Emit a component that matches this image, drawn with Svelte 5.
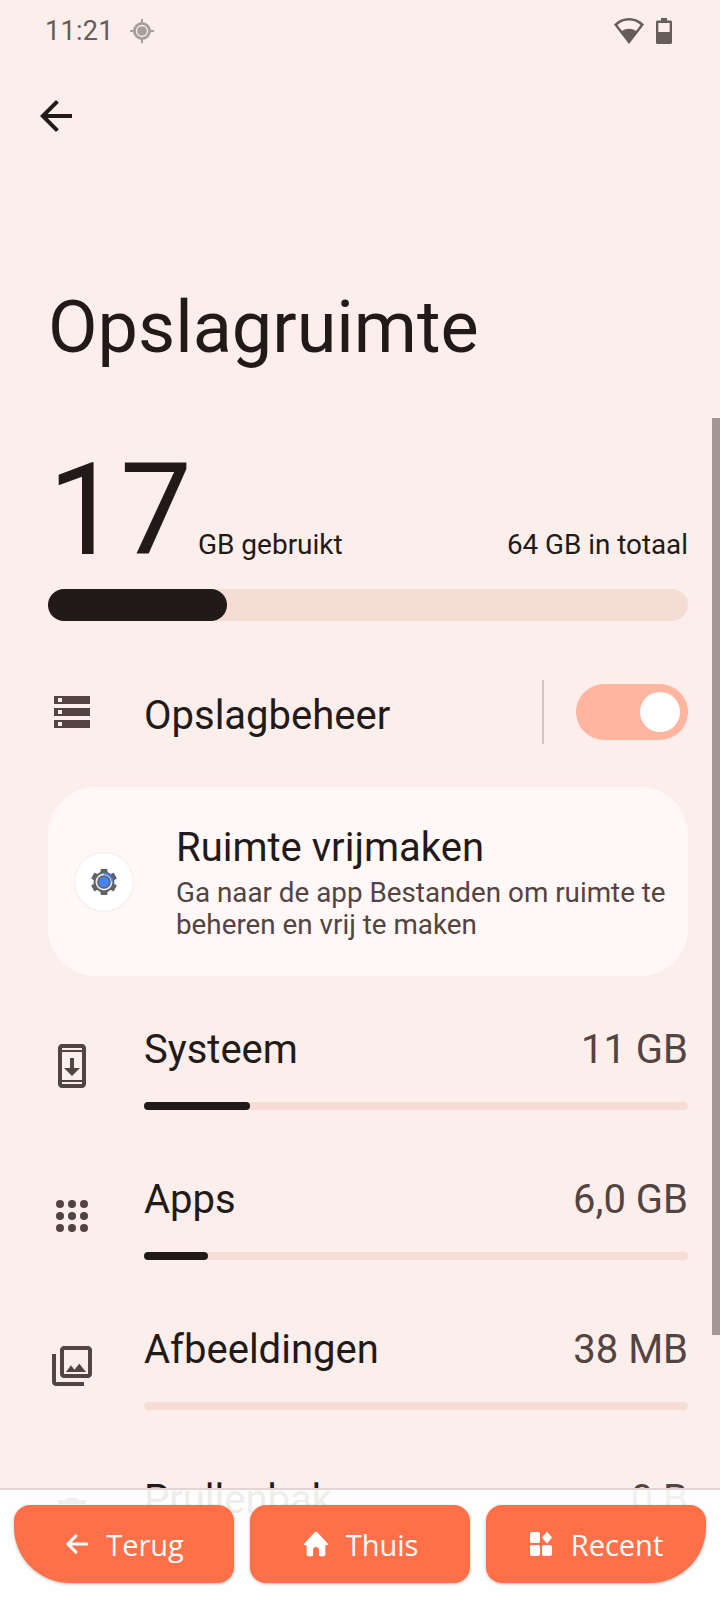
<script>
  const rows = [
    { name: 'Systeem', size: '11 GB', used: 19.5, icon: 'system' },
    { name: 'Apps', size: '6,0 GB', used: 11.7, icon: 'apps' },
    { name: 'Afbeeldingen', size: '38 MB', used: 0, icon: 'photos' },
    { name: 'Prullenbak', size: '0 B', used: 0, icon: 'trash' }
  ];
  const dots = [0, 1, 2];
  const teeth = [0, 60, 120];
</script>

<div class="screen">
  <div class="status">
    <span class="time">11:21</span>
    <svg class="gps" width="24" height="24" viewBox="0 0 24 24">
      <path fill="#a89f9c" d="M11 0h2v4h-2zM11 20h2v4h-2zM0 11h4v2H0zM20 11h4v2h-4z" />
      <circle cx="12" cy="12" r="9" fill="#a89f9c" />
      <circle cx="12" cy="12" r="5.500" fill="#a89f9c" stroke="#fceeea" stroke-width="1.300" />
    </svg>
    <span class="spacer"></span>
    <svg class="wifi" width="30" height="26" viewBox="0 0 30 26">
      <path fill="#665d5b" fill-rule="evenodd" d="M15 0C9.500 0 4.500 2 0 6.500L15 26 30 6.500C25.500 2 20.500 0 15 0zM15 2.500c4.300 0 8.300 1.400 11.600 4.400l-4.700 6.200C20 11.500 17.600 10.700 15 10.700s-5 .8-6.900 2.400L3.400 6.900C6.700 3.900 10.700 2.500 15 2.500z" />
    </svg>
    <svg class="battery" width="16" height="26" viewBox="0 0 16 26">
      <path fill="#665d5b" fill-rule="evenodd" d="M5 0h6v2.500h3.500c.8 0 1.500.7 1.500 1.500v20.500c0 .8-.7 1.500-1.500 1.500h-13C.7 26 0 25.300 0 24.500V4c0-.8.7-1.500 1.500-1.500H5zM2.300 5v9h11.400V5z" />
    </svg>
  </div>

  <div class="topbar">
    <svg width="48" height="48" viewBox="0 0 24 24">
      <path fill="#211a18" d="M20 11H7.830l5.590-5.590L12 4l-8 8 8 8 1.410-1.410L7.830 13H20v-2z" />
    </svg>
  </div>

  <h1>Opslagruimte</h1>

  <div class="summary">
    <span class="big">17</span>
    <span class="unit">GB gebruikt</span>
    <span class="total">64 GB in totaal</span>
  </div>
  <div class="bar-main"><div class="bar-main-fill"></div></div>

  <div class="manager">
    <svg class="stack" width="36" height="32" viewBox="0 0 36 32">
      <path fill="#534341" fill-rule="evenodd" d="M0 0h36v8H0zM4 2v4h4V2zM0 12h36v8H0zM4 14v4h4v-4zM0 24h36v8H0zM4 26v4h4v-4z" />
    </svg>
    <span class="manager-label">Opslagbeheer</span>
    <span class="divider"></span>
    <div class="toggle"><div class="thumb"></div></div>
  </div>

  <div class="card">
    <div class="badge">
      <svg width="30" height="30" viewBox="0 0 30 30">
        {#each teeth as a}
          <rect x="11.500" y="2" width="7" height="26" rx="1" fill="#5f6368" transform="rotate({a} 15 15)" />
        {/each}
        <circle cx="15" cy="15" r="10.500" fill="#5f6368" />
        <circle cx="15" cy="15" r="8.500" fill="#e8e8e8" />
        <circle cx="15" cy="15" r="6.800" fill="#5f6368" />
        <circle cx="15" cy="15" r="5.200" fill="#4285f4" />
        <path fill="none" stroke="#4285f4" stroke-width="1.800" d="M15 6.500a8.500 8.500 0 0 1 8.500 8.500" />
      </svg>
    </div>
    <div class="card-text">
      <div class="card-title">Ruimte vrijmaken</div>
      <div class="card-desc">Ga naar de app Bestanden om ruimte te beheren en vrij te maken</div>
    </div>
  </div>

  {#each rows as row}
    <div class="row">
      <div class="row-icon">
        {#if row.icon === 'system'}
          <svg width="48" height="48" viewBox="0 0 24 24">
            <path fill="#534341" d="M17 1.010L7 1c-1.100 0-2 .9-2 2v18c0 1.100.9 2 2 2h10c1.100 0 2-.9 2-2V3c0-1.100-.9-1.990-2-1.990zM17 21H7v-1h10v1zm0-2H7V5h10v14zm0-15H7V3h10v1zm-1 9h-3V8h-2v5H8l4 4 4-4z" />
          </svg>
        {:else if row.icon === 'apps'}
          <svg width="48" height="48" viewBox="0 0 48 48">
            {#each dots as y}
              {#each dots as x}
                <circle cx={12 + x * 12} cy={12 + y * 12} r="4" fill="#534341" />
              {/each}
            {/each}
          </svg>
        {:else if row.icon === 'photos'}
          <svg width="48" height="48" viewBox="0 0 24 24">
            <path fill="#534341" d="M20 4v12H8V4h12m0-2H8c-1.100 0-2 .9-2 2v12c0 1.100.9 2 2 2h12c1.100 0 2-.9 2-2V4c0-1.100-.9-2-2-2zm-8.500 9.670l1.690 2.260 2.480-3.100L19 15H9zM2 6v14c0 1.100.9 2 2 2h14v-2H4V6H2z" />
          </svg>
        {:else}
          <svg width="48" height="48" viewBox="0 0 24 24">
            <path fill="#534341" d="M6 19c0 1.100.9 2 2 2h8c1.100 0 2-.9 2-2V7H6v12zM19 4h-3.500l-1-1h-5l-1 1H5v2h14V4z" />
          </svg>
        {/if}
      </div>
      <div class="row-body">
        <div class="row-head">
          <span class="row-name">{row.name}</span>
          <span class="row-size">{row.size}</span>
        </div>
        <div class="row-bar">
          <div class="row-fill" style="width: {row.used}%"></div>
        </div>
      </div>
    </div>
  {/each}

  <div class="scrollbar"></div>

  <div class="footer">
    <button class="nav left">
      <svg width="26" height="26" viewBox="0 0 24 24">
        <path fill="none" stroke="#fff" stroke-width="2.800" stroke-linecap="round" stroke-linejoin="round" d="M21 12H4M11 4.500 3.500 12l7.500 7.500" />
      </svg>
      Terug
    </button>
    <button class="nav">
      <svg width="28" height="28" viewBox="0 0 24 24">
        <path fill="#fff" d="M12 1.500c.5 0 1 .3 1.300.7L22 11.500c.6.8.3 1.500-.7 1.500H20v8c0 .8-.7 1.500-1.500 1.500H15.500c-.6 0-1-.4-1-1v-5c0-1-1-2-2.500-2s-2.500 1-2.500 2v5c0 .6-.4 1-1 1H5.500C4.700 22.500 4 21.800 4 21v-8H2.700c-1 0-1.300-.7-.7-1.500l8.700-9.300c.3-.4.8-.7 1.300-.7z" />
      </svg>
      Thuis
    </button>
    <button class="nav right">
      <svg width="26" height="26" viewBox="0 0 26 26">
        <rect x="1" y="1" width="10" height="11" rx="2" fill="#fff" />
        <rect x="1" y="14" width="10" height="11" rx="2" fill="#fff" />
        <rect x="13" y="14" width="10" height="11" rx="2" fill="#fff" />
        <path fill="#fff" d="M18 .5 23 6.500 18 12.500 13 6.500z" />
      </svg>
      Recent
    </button>
  </div>
</div>

<style>
  :global(body) {
    margin: 0;
    background: #fceeea;
  }

  .screen {
    position: relative;
    width: 720px;
    height: 1600px;
    overflow: hidden;
    background: #fceeea;
    color: #211a18;
    font-family: Roboto, sans-serif;
  }

  .status {
    display: flex;
    align-items: center;
    height: 62px;
    padding: 0 48px 0 45px;
    color: #655c5a;
  }
  .time {
    font-size: 27px;
    letter-spacing: 0.3px;
  }
  .gps {
    margin-left: 16px;
  }
  .spacer {
    flex: 1;
  }
  .battery {
    margin-left: 12px;
  }

  .topbar {
    height: 48px;
    padding: 30px 32px 0;
  }
  .topbar svg {
    display: block;
  }

  h1 {
    margin: 146px 0 0 48px;
    font-size: 72px;
    font-weight: 400;
    line-height: 84px;
  }

  .summary {
    display: flex;
    align-items: baseline;
    margin: 80px 32px 0 48px;
    height: 120px;
  }
  .big {
    font-size: 128px;
    line-height: 120px;
  }
  .unit {
    margin-left: 6px;
    font-size: 28px;
  }
  .total {
    margin-left: auto;
    font-size: 27.8px;
  }

  .bar-main {
    margin: 19px 32px 0 48px;
    height: 32px;
    border-radius: 16px;
    background: #f5ddd6;
  }
  .bar-main-fill {
    width: 179px;
    height: 32px;
    border-radius: 16px;
    background: #211a18;
  }

  .manager {
    display: flex;
    align-items: center;
    margin: 59px 32px 0 54px;
    height: 64px;
  }
  .manager-label {
    margin: 6px 0 0 54px;
    font-size: 40px;
  }
  .divider {
    width: 2px;
    height: 64px;
    margin-left: auto;
    background: #cfc4c1;
  }
  .toggle {
    display: flex;
    align-items: center;
    justify-content: flex-end;
    box-sizing: border-box;
    width: 112px;
    height: 56px;
    margin-left: 32px;
    padding-right: 8px;
    border-radius: 28px;
    background: #ffb5a0;
  }
  .thumb {
    width: 40px;
    height: 40px;
    border-radius: 50%;
    background: #fff;
  }

  .card {
    display: flex;
    align-items: center;
    box-sizing: border-box;
    height: 189px;
    margin: 43px 32px 0 48px;
    padding-left: 27px;
    border-radius: 48px;
    background: #fff8f6;
  }
  .badge {
    display: flex;
    align-items: center;
    justify-content: center;
    flex: none;
    width: 58px;
    height: 58px;
    border-radius: 50%;
    background: #fff;
    box-shadow: 0 0 2px rgba(0, 0, 0, 0.15);
  }
  .card-text {
    margin-left: 43px;
    padding-top: 4px;
  }
  .card-title {
    font-size: 40px;
    line-height: 44px;
  }
  .card-desc {
    margin-top: 7px;
    font-size: 27.8px;
    line-height: 32px;
    color: #534341;
  }

  .row {
    display: flex;
    height: 150px;
    padding: 0 32px 0 48px;
  }
  .row-icon {
    flex: none;
    width: 48px;
    padding-top: 66px;
  }
  .row-icon svg {
    display: block;
  }
  .row-body {
    flex: 1;
    margin-left: 48px;
    padding-top: 49px;
  }
  .row-head {
    display: flex;
    justify-content: space-between;
    height: 50px;
    font-size: 40px;
    line-height: 50px;
  }
  .row-size {
    color: #534341;
  }
  .row-bar {
    height: 8px;
    margin-top: 27px;
    border-radius: 4px;
    background: #f5ddd6;
  }
  .row-fill {
    height: 8px;
    border-radius: 4px;
    background: #211a18;
  }

  .scrollbar {
    position: absolute;
    top: 418px;
    right: 0;
    width: 8px;
    height: 917px;
    background: #a39693;
  }

  .footer {
    position: absolute;
    left: 0;
    right: 0;
    bottom: 0;
    display: flex;
    gap: 16px;
    box-sizing: border-box;
    height: 112px;
    padding: 15px 14px 0;
    border-top: 2px solid #e2d5d3;
    background: rgba(255, 255, 255, 0.92);
  }
  .nav {
    display: flex;
    align-items: center;
    justify-content: center;
    gap: 16px;
    flex: 1;
    height: 78px;
    padding: 0;
    border: none;
    border-radius: 16px;
    background: #ff7049;
    color: #fff;
    font-family: "Open Sans", sans-serif;
    font-size: 29px;
    font-weight: 500;
    box-shadow: 0 1px 3px rgba(0, 0, 0, 0.25);
  }
  .nav.left {
    border-bottom-left-radius: 56px;
  }
  .nav.right {
    border-bottom-right-radius: 56px;
  }
</style>
